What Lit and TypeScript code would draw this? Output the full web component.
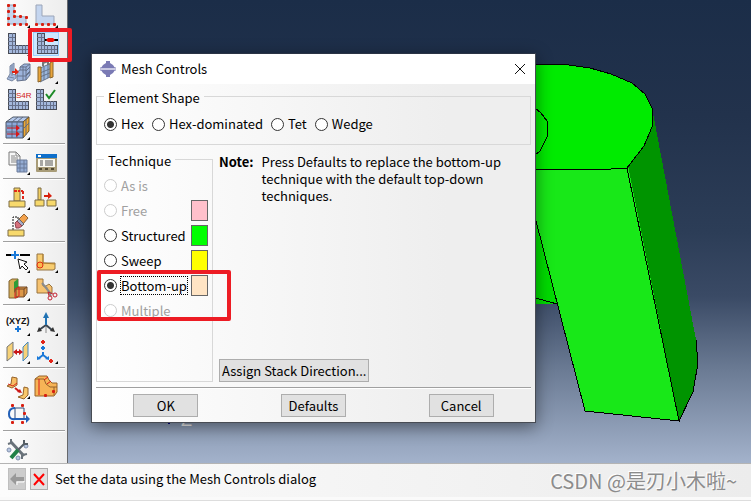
import { LitElement, html, svg, css, nothing } from "lit";
import { customElement, property, state } from "lit/decorators.js";
import { classMap } from "lit/directives/class-map.js";

const more = svg`<path d="M26 23v3h-3z" fill="#000"/>`;

const meshL = (x: number) => svg`
  <g transform="translate(${x} 3)" shape-rendering="crispEdges">
    <path d="M1 0h6v12h13v8H0V1z" fill="#a4b8dc" stroke="#484c56"/>
    <path d="M4 0v20M7 12v8M10 12v8M14 12v8M17 12v8M0 4h7M0 8h7M0 12h7M0 16h20" fill="none" stroke="#66708a"/>
  </g>`;

const dots = (pts: number[][], color = "#d81e10") =>
  pts.map(([x, y]) => svg`<rect x=${x - 1} y=${y - 1} width="3" height="3" rx="1" fill=${color}/>`);

const plus = (x: number, y: number, color: string, r = 3) =>
  svg`<path d="M${x - r} ${y}h${r * 2}M${x} ${y - r}v${r * 2}" stroke=${color} stroke-width="2"/>`;

const icons: Record<string, unknown> = {
  seedPart: svg`<path d="M4 3h6v11l12 1v7H4z" fill="#c4d5ef" stroke="#9ba5b8"/>
    ${dots([[4, 3], [10, 3], [4, 9], [10, 9], [4, 16], [10, 14], [16, 14], [22, 15], [4, 22], [10, 22], [16, 22], [22, 22]])}${more}`,
  seedEdge: svg`<path d="M4 3h6v11h12v8H4z" fill="#c4d5ef" stroke="#9ba5b8"/>
    ${dots([[4, 22], [10, 22], [16, 22], [22, 22]])}${more}`,
  meshPart: svg`${meshL(4)}${more}`,
  meshControls: svg`${meshL(5)}<path d="M13 10h13" stroke="#000" stroke-width="2"/><path d="M16 8h5l2 2-2 2h-5l-2-2z" fill="#f01008"/>`,
  elementType: svg`<path d="M6 8l4-3v9l-2 2 4 1v3l-4 3-5-2 3-5z" fill="#a5bade" stroke="#7886a0"/><path d="M8 7v11M5 19l5 1" stroke="#7886a0"/>
    <path d="M13 14l3-2V9l4-3h6v11l-4 5-9 1z" fill="#9db4dc" stroke="#66738c"/><path d="M16 12h6v10M16 9h6v4M22 9l4-3M22 13l4-4M22 17l4-4M19 8v14M13 18h9l4-4" fill="none" stroke="#66738c"/>
    <path d="M8 13h3v-3l4 4-4 3v-2H8z" fill="#e02412"/>`,
  orientation: svg`<path d="M8 10l12-5v13L8 24z" fill="#9bb8de" stroke="#66758c"/><path d="M12 9v13M16 7v13M8 15l12-5M8 19l12-5" stroke="#66758c"/>
    <path d="M6 9v15l3-1V9zM18 5l3-2v16l-3 1z" fill="#e9a63c" stroke="#8a642a"/><path d="M11 8V5l5-2v4" fill="none" stroke="#777" stroke-width="2"/>${more}`,
  s4r: svg`${meshL(4)}<text x="12" y="12" class="tag">S4R</text>`,
  verify: svg`${meshL(4)}<path d="M14 8l3 4 6-8" fill="none" stroke="#1c8a26" stroke-width="2"/>`,
  cubeMesh: svg`<path d="M2 8l7-5h16l-6 5z" fill="#b4c8ea" stroke="#4f5968"/><path d="M19 8l6-5v14l-6 7z" fill="#f0a830" stroke="#6b542a"/>
    <path d="M2 8h17v16H2z" fill="#8ca9dc" stroke="#4f5968"/><path d="M8 8v16M13 8v16M2 12h17M2 18h17M22 5v16M19 15l6-6M8 8l6-5M13 8l6-5" stroke="#5f6a80"/>
    <path d="M3 14h9M3 20h9" stroke="#b81414"/><path d="M12 11l4 3-4 3zM12 17l4 3-4 3z" fill="#d81818"/>${more}`,
  report: svg`<path d="M5 3h7l4 4v9H5z" fill="#f7f7f7" stroke="#7b7b7b"/><path d="M12 3v4h4M7 7h4M7 9h7M7 11h7M7 13h7" fill="none" stroke="#858585"/>
    <path d="M13 11h10v12H13z" fill="#94acd4" stroke="#6a7b99"/><path d="M16 11v12M20 11v12M13 15h10M13 19h10" stroke="#6a7b99"/>${more}`,
  manager: svg`<rect x="4" y="5" width="21" height="18" rx="1" fill="#a89c78"/><rect x="4" y="5" width="21" height="4" fill="#0e6fca"/><path d="M6 7h3" stroke="#fff" stroke-width="2"/>
    <rect x="6" y="10" width="17" height="8" fill="#fbfbf4"/><path d="M8 12h3M13 12h8M8 14h3M13 14h8M8 16h3M13 16h8" stroke="#555"/><path d="M7 20h3M13 20h3M19 20h3" stroke="#544c34" stroke-width="2"/>`,
  pillar: svg`<path d="M10 4h6v13h-6z" fill="#f2cf62" stroke="#7c6c46"/><path d="M5 17h16v6H5z" fill="#f7d96c" stroke="#7c6c46"/>
    <path d="M10 7h6M17 7h2" stroke="#e0281a" stroke-width="2" stroke-dasharray="3 1"/><path d="M19 7v10" stroke="#e0281a" stroke-width="2" stroke-dasharray="3 2"/>${more}`,
  split: svg`<path d="M6 4h3v12H6z" fill="#f2cf62" stroke="#7c6c46"/><path d="M3 16h9v6H3zM15 16h9v6h-9z" fill="#f7d96c" stroke="#7c6c46"/>
    <path d="M12 12h5" stroke="#d8200e" stroke-width="2"/><path d="M16 8l4 4-4 3z" fill="#d8200e"/>${more}`,
  erase: svg`<path d="M9 18V5h5M14 5v12" fill="none" stroke="#111" stroke-dasharray="2 1"/><path d="M4 18h16v6H4z" fill="#f7d96c" stroke="#7c6c46"/>
    <path d="M15 7l5-5 4 4-5 6z" fill="#f3a24c" stroke="#8c6238"/><path d="M13 9l2-2 5 5-2 2z" fill="#a8acc8" stroke="#666"/><path d="M11 11l2-2 5 5-3 2h-3z" fill="#d6707c" stroke="#8d4350"/>`,
  pick: svg`<path d="M2 8h5M16 8h10" stroke="#000" stroke-width="2"/>${plus(11, 8, "#1878d8", 4)}
    <path d="M14 12l9 3-3 2 4 4-2 2-4-4-2 3z" fill="#fff" stroke="#111"/>${more}`,
  elbow: svg`<path d="M5 7h6v9h12v6l-2 1H5z" fill="#f8cd70" stroke="#957444"/><path d="M11 7v9M11 16l12 1" stroke="#b3822f"/><circle cx="8" cy="18" r="3" fill="#fab84c" stroke="#e22c12"/>${more}`,
  partition: svg`<path d="M5 6l3-2h6v18l-2 1H5z" fill="#d8ae54" stroke="#7c6132"/><path d="M10 7l4-3v9l-4 5z" fill="#2f9c38"/><path d="M12 14l2-2h9v6l-3 4h-8z" fill="#dd9848" stroke="#724a28"/>
    <path d="M12 14h8v8M20 14l3-2" fill="none" stroke="#724a28"/><path d="M11 14l4-2v9l-4 2z" fill="none" stroke="#d22"/>${more}`,
  trim: svg`<path d="M5 4h6v7h3l3-2 3 3v6H5z" fill="#f6c270" stroke="#98733c"/><path d="M10 8l9 11M14 12l5 9" stroke="#8b8b8b" stroke-width="2"/>
    <circle cx="18" cy="23" r="2" fill="none" stroke="#c22030"/><circle cx="23" cy="20" r="2" fill="none" stroke="#c22030"/><path d="M16 17l5 2M16 17l1 4" stroke="#c22030"/>`,
  xyz: svg`<text x="2" y="14" class="xyz">(XYZ)</text>${plus(14, 19, "#1878d8")}${more}`,
  triad: svg`<path d="M14 14v9" stroke="#888"/><path d="M14 15l-7 5M14 15l6 5" stroke="#3b4652" stroke-width="2"/><path d="M14 15V6" stroke="#2173b4" stroke-width="2"/><path d="M14 2l3 6h-6z" fill="#2173b4"/>
    <path d="M5 22l2-5 3 4zM23 22l-2-5-3 4z" fill="#333"/>${more}`,
  planes: svg`<path d="M3 9l6-5v14l-6 5z" fill="#f7d278" stroke="#777"/><path d="M19 9l5-5v14l-5 5z" fill="#f7d278" stroke="#4587bb"/>
    <path d="M12 14h5" stroke="#c81818" stroke-width="2"/><path d="M9 14l4-3v6zM19 14l-4-3v6z" fill="#c81818"/>${more}`,
  datum: svg`${plus(11, 4, "#e22418", 2)}${plus(11, 10, "#1878d8", 2)}<path d="M11 14v3l-4 3M11 17l4 3" fill="none" stroke="#1878d8" stroke-width="2"/>
    <path d="M5 22v-4l4 3zM17 22v-4l-4 3z" fill="#1878d8"/>${plus(19, 23, "#e22418", 2)}${more}`,
  sweep: svg`<path d="M8 4l5 1v7l-5 3-5-2 4-2z" fill="#f7bd64" stroke="#96632a"/><path d="M4 11l5 2 4-3" fill="none" stroke="#d6281a"/>
    <path d="M20 14l4 1v7l-4 4-6-2 5-2z" fill="#f8c76c" stroke="#96632a"/><path d="M11 15l5 4" stroke="#cc1818" stroke-width="2"/><path d="M18 20l-5-1 3-3z" fill="#cc1818"/>${more}`,
  block: svg`<path d="M3 6l4-3h8l2 4 3 3h5v9l-3 4H3z" fill="#f7b456" stroke="#96632a"/><path d="M3 6h9l2 5 4 3h7M22 14v8" fill="none" stroke="#96632a"/>
    <path d="M7 6v16M12 7l4-3M15 11l4-3" stroke="#d81818"/>${dots([[13, 22], [21, 18]])}`,
  spline: svg`<path d="M20 7H11Q5 7 5 13T11 18M11 7v11M20 7v11" fill="none" stroke="#2f4a7a"/><path d="M11 7Q5 7 5 13T11 18H23" fill="none" stroke="#2260b8" stroke-width="2"/><path d="M22 14l4 4-4 4z" fill="#2260b8"/>
    ${dots([[8, 4], [18, 4], [20, 12], [8, 21], [18, 21]])}`,
  tools: svg`<circle cx="22" cy="10" r="2" fill="#b9c8e2" stroke="#8090ac"/><circle cx="5" cy="14" r="2" fill="#b9c8e2" stroke="#8090ac"/><circle cx="14" cy="22" r="2" fill="#b9c8e2" stroke="#8090ac"/>
    <path d="M7 6l13 14" stroke="#69727a" stroke-width="3" fill="none"/><path d="M4 8l3-1V3M18 23v-4l5-1" stroke="#69727a" stroke-width="2" fill="none"/>
    <path d="M20 4v4l4 0M20 8L14 14" stroke="#555f66" stroke-width="2" fill="none"/><path d="M14 14l-7 8" stroke="#218048" stroke-width="4"/>`,
};

const groups: string[][] = [
  ["seedPart", "seedEdge", "meshPart", "meshControls", "elementType", "orientation", "s4r", "verify", "cubeMesh"],
  ["report", "manager"],
  ["pillar", "split", "erase"],
  ["pick", "elbow", "partition", "trim"],
  ["xyz", "triad", "planes", "datum"],
  ["sweep", "block", "spline"],
  ["tools"],
];

@customElement("tool-box")
class ToolBox extends LitElement {
  @property() active = "meshControls";

  static styles = css`
    :host { display: block; flex: none; width: 64px; padding: 2px 0 0 3px; overflow: hidden;
      border-right: 1px solid #66686c; background: linear-gradient(90deg, #fdfdfd, #ededed); }
    .group { display: grid; grid-template-columns: 28px 28px; grid-auto-rows: 28px; padding-left: 1px; }
    hr { height: 1px; margin: 1px 2px 4px 0; border: 0; border-top: 1px solid #a0a0a0; background: #fff; }
    button { position: relative; width: 28px; height: 28px; padding: 0; border: 0; background: none; }
    .on::before { content: ""; position: absolute; inset: 2px 1px; border: 1px solid #99d1ff; background: #cce8ff; }
    svg { position: relative; display: block; width: 28px; height: 28px; }
    .tag { font: 8px "Liberation Sans", sans-serif; fill: #d01818; }
    .xyz { font: bold 9px "Liberation Sans", sans-serif; fill: #111; }
  `;

  render() {
    return groups.map((g, i) => html`
      ${i ? html`<hr>` : nothing}
      <div class="group">
        ${g.map((n) => html`<button class=${classMap({ on: n === this.active })} aria-label=${n}>
          <svg viewBox="0 0 28 28" aria-hidden="true">${icons[n]}</svg>
        </button>`)}
      </div>`);
  }
}

const shapes = ["Hex", "Hex-dominated", "Tet", "Wedge"];
const techniques = [
  { name: "As is", off: true },
  { name: "Free", off: true, color: "pink" },
  { name: "Structured", color: "green" },
  { name: "Sweep", color: "yellow" },
  { name: "Bottom-up", color: "bisque" },
  { name: "Multiple", off: true },
];

@customElement("mesh-dialog")
class MeshDialog extends LitElement {
  @state() technique = "Bottom-up";

  static styles = css`
    :host { display: flex; flex-direction: column; box-sizing: border-box; color: #000;
      border: 1px solid #484c54; border-top-color: #2a3344; box-shadow: 0 4px 16px rgba(0, 0, 0, .45);
      background: linear-gradient(90deg, #fff, #eee 80%); }
    header { display: flex; align-items: center; height: 30px; padding: 0 8px; background: #fff; gap: 5px; }
    h1 { flex: 1; margin: 0; font-size: 13px; font-weight: 400; }
    .logo { width: 16px; height: 16px; }
    .close { width: 13px; height: 13px; padding: 0; border: 0; background: none; }
    .close svg { display: block; width: 13px; height: 13px; }
    .body { display: flex; flex-direction: column; padding: 3px 4px 0; }
    fieldset { box-sizing: border-box; margin: 0; min-width: 0; border: 1px solid #d8d8d8; }
    legend { padding: 3px 4px 0; line-height: 16px; }
    .shapes { display: flex; gap: 8px; padding: 9px 7px 0; height: 58px; }
    .shapes label { display: flex; align-items: center; height: 18px; gap: 4px; }
    .columns { display: flex; gap: 6px; margin-top: 5px; }
    .technique { flex: none; width: 117px; height: 232px; padding: 4px 4px 0 7px; }
    .row { display: flex; align-items: center; height: 25px; }
    .row input { margin-right: 3px; }
    .row label { border: 1px dotted transparent; line-height: 17px; }
    .row .focus { border-color: #000; }
    .row .off { color: #a0a0a0; }
    input { appearance: none; flex: none; box-sizing: border-box; width: 13px; height: 13px; margin: 0; border: 1px solid #333; border-radius: 50%; background: #fff; }
    input:checked { background: radial-gradient(circle, #333 3px, #fff 4px); }
    input:disabled { border-color: #ccc; }
    .swatch { box-sizing: border-box; width: 17px; height: 21px; margin-left: auto; border: 1px solid #666; }
    .pink { background: #ffc0cb; }
    .green { background: #0f0; }
    .yellow { background: #ff0; }
    .bisque { background: #ffe4c4; }
    .side { flex: 1; display: flex; flex-direction: column; align-items: flex-start; justify-content: space-between; }
    .note { display: flex; gap: 8px; margin: 3px 0 0; line-height: 17px; padding-right: 20px; }
    .note span { max-width: 250px; }
    .push { box-sizing: border-box; height: 23px; padding: 0 2px; border: 1px solid #adadad; background: #e1e1e1; color: #000; font: inherit; line-height: 20px; white-space: nowrap; }
    hr { height: 1px; margin: 5px 0 0; border: 0; border-top: 1px solid #a0a0a0; background: #fff; }
    footer { display: grid; grid-template-columns: repeat(3, 1fr); justify-items: center; padding: 5px 0; }
    footer .push { width: 65px; }
  `;

  render() {
    return html`
      <header>
        <svg class="logo" viewBox="0 0 16 16" aria-hidden="true">
          <path d="M6 0h4v2l3 2 2 3H1l2-3 3-2zM1 9h14l-2 3-3 2v2H6v-2l-3-2z" fill="#7a7ab4"/>
          <path d="M0 7h16M0 9h16" stroke="#7a7ab4"/><path d="M1 8h14" stroke="#d7d7ea"/>
        </svg>
        <h1>Mesh Controls</h1>
        <button class="close" aria-label="Close"><svg viewBox="0 0 13 13"><path d="M1 1l10 10M11 1L1 11" stroke="#111"/></svg></button>
      </header>
      <div class="body">
        <fieldset class="shapes">
          <legend>Element Shape</legend>
          ${shapes.map((s) => html`<label><input type="radio" name="shape" ?checked=${s === "Hex"}>${s}</label>`)}
        </fieldset>
        <div class="columns">
          <fieldset class="technique">
            <legend>Technique</legend>
            ${techniques.map((t, i) => html`<div class="row">
              <input type="radio" id="t${i}" name="technique" ?disabled=${!!t.off} .checked=${t.name === this.technique}
                @change=${() => (this.technique = t.name)}>
              <label for="t${i}" class=${classMap({ off: !!t.off, focus: t.name === this.technique })}>${t.name}</label>
              ${t.color ? html`<i class="swatch ${t.color}"></i>` : nothing}
            </div>`)}
          </fieldset>
          <div class="side">
            <p class="note"><b>Note:</b><span>Press Defaults to replace the bottom-up technique with the default top-down techniques.</span></p>
            <button class="push">Assign Stack Direction...</button>
          </div>
        </div>
        <hr>
      </div>
      <footer>
        <button class="push">OK</button><button class="push">Defaults</button><button class="push">Cancel</button>
      </footer>`;
  }
}

@customElement("app-root")
class AppRoot extends LitElement {
  static styles = css`
    :host { position: relative; display: flex; flex-direction: column; height: 100vh; overflow: hidden; font: 13px/18px "Noto Sans CJK SC", "Noto Sans", sans-serif; background: #fafafa; }
    main { flex: 1; min-height: 0; display: flex; }
    .viewport { position: relative; flex: 1; min-width: 0;
      background: linear-gradient(#1b2d48, #22324c 25%, #2c3d57 50%, #3a4a65 64%, #6b7b94 80%, #a3b2cb); }
    .model { position: absolute; left: 0; top: 0; width: 100%; height: 100%; }
    .axis { font: 18px "Liberation Sans", sans-serif; fill: #eee; }
    mesh-dialog { position: absolute; left: 23px; top: 53px; width: 445px; }
    .mark { position: absolute; box-sizing: border-box; border: 4px solid #ed1c24; border-radius: 2px; pointer-events: none; }
    .mark-tool { left: 28px; top: 28px; width: 44px; height: 34px; }
    .mark-row { left: 97px; top: 270px; width: 134px; height: 51px; }
    .status { display: flex; align-items: center; gap: 4px; height: 33px; margin-bottom: 3px; padding: 0 14px 0 8px; border-top: 1px solid #b4b4b4; background: linear-gradient(90deg, #fcfcfc, #ececec); }
    .status button, .msg { margin-bottom: 3px; }
    .status button { box-sizing: border-box; width: 18px; height: 22px; padding: 0; border: 1px solid #adadad; background: #e1e1e1; }
    .status .back { background: #ccc; border-color: #bfbfbf; }
    .status svg { display: block; width: 16px; height: 20px; }
    .msg { flex: 1; padding-left: 3px; color: #000; }
    .credit { font: 20px/30px "Noto Sans CJK SC", sans-serif; color: #8c8c8c; text-shadow: -1px -1px 0 #fff; white-space: nowrap; }
    .edge { height: 1px; background: #ddd; }
  `;

  render() {
    return html`
      <main>
        <tool-box></tool-box>
        <div class="viewport">
          <svg class="model" viewBox="68 0 683 463" preserveAspectRatio="xMinYMin" shape-rendering="crispEdges" aria-hidden="true">
            <path d="M500 200h60l-3 104-57-16z" fill="#00dc00" stroke="#000"/>
            <path d="M652 108L696 340 698 363 693 392 679 421 620 168z" fill="#009400"/>
            <path d="M696 340L698 363 693 392 679 421" fill="none" stroke="#000"/>
            <path d="M520 160h107L679 421 585 411 535 217z" fill="#18e818"/>
            <path d="M500 160h35v57l25 87h-60z" fill="#00dc00"/>
            <path d="M535 217l50 194h20V240l-70-60z" fill="#18e818"/>
            <path d="M500 288l57 16M627 168L679 421 585 411 535 217" fill="none" stroke="#000"/>
            <path d="M500 64h62l28 4 21 6 21 9 13 11 7 14v19l-8 19-17 22-16 1H500z" fill="#00eb00" stroke="#000"/>
            <path d="M530 104l11 9 6 8v16l-7 14-10 8" fill="none" stroke="#000"/>
            <path d="M163 416l6 9 6-9z" fill="#000080"/>
            <text class="axis" x="181" y="426">Z</text>
          </svg>
          <mesh-dialog></mesh-dialog>
        </div>
      </main>
      <div class="status">
        <button class="back" aria-label="Back"><svg viewBox="0 0 16 20"><path d="M1 10l6-6v4h8v4H7v4z" fill="#999"/><path d="M15 12v1H8v3" fill="none" stroke="#fff"/></svg></button>
        <button aria-label="Cancel"><svg viewBox="0 0 16 20"><path d="M3 5l10 11M13 5L3 16" stroke="#f00" stroke-width="2"/></svg></button>
        <span class="msg">Set the data using the Mesh Controls dialog</span>
        <span class="credit">CSDN @是刃小木啦~</span>
      </div>
      <div class="edge"></div>
      <div class="mark mark-tool"></div>
      <div class="mark mark-row"></div>`;
  }
}
